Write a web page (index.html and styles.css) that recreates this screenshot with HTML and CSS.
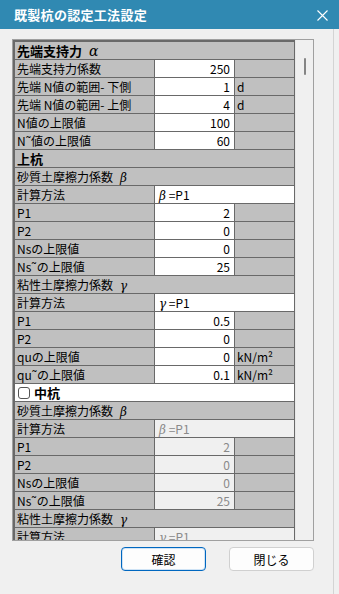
FILE: index.html
```html
<!DOCTYPE html>
<html lang="ja">
<head>
<meta charset="utf-8">
<title>既製杭の認定工法設定</title>
<link rel="stylesheet" href="styles.css">
</head>
<body>
<div class="titlebar">
  <span class="title">既製杭の認定工法設定</span>
  <svg class="close" width="11" height="11" viewBox="0 0 11 11"><path d="M0.5 0.5L10.5 10.5M10.5 0.5L0.5 10.5" stroke="#fff" stroke-width="1.1" fill="none"/></svg>
</div>
<div class="frame">
  <div class="grid">
    <div class="full sec">先端支持力<span class="gk gap">α</span></div>
    <div class="lbl">先端支持力係数</div><div class="val">250</div><div class="unit"></div>
    <div class="lbl">先端 N値の範囲- 下側</div><div class="val">1</div><div class="unit">d</div>
    <div class="lbl">先端 N値の範囲- 上側</div><div class="val">4</div><div class="unit">d</div>
    <div class="lbl">N値の上限値</div><div class="val">100</div><div class="unit"></div>
    <div class="lbl">N˜値の上限値</div><div class="val">60</div><div class="unit"></div>
    <div class="full sec">上杭</div>
    <div class="full sub">砂質土摩擦力係数<span class="gk gap">β</span></div>
    <div class="lbl">計算方法</div><div class="method"><span class="gk">β</span> =P1</div>
    <div class="lbl">P1</div><div class="val">2</div><div class="unit"></div>
    <div class="lbl">P2</div><div class="val">0</div><div class="unit"></div>
    <div class="lbl">Nsの上限値</div><div class="val">0</div><div class="unit"></div>
    <div class="lbl">Ns˜の上限値</div><div class="val">25</div><div class="unit"></div>
    <div class="full sub">粘性土摩擦力係数<span class="gk gap">γ</span></div>
    <div class="lbl">計算方法</div><div class="method"><span class="gk">γ</span> =P1</div>
    <div class="lbl">P1</div><div class="val">0.5</div><div class="unit"></div>
    <div class="lbl">P2</div><div class="val">0</div><div class="unit"></div>
    <div class="lbl">quの上限値</div><div class="val">0</div><div class="unit">kN/m²</div>
    <div class="lbl">qu˜の上限値</div><div class="val">0.1</div><div class="unit">kN/m²</div>
    <div class="full sec check"><span class="box"></span>中杭</div>
    <div class="full sub">砂質土摩擦力係数<span class="gk gap">β</span></div>
    <div class="lbl">計算方法</div><div class="method dis"><span class="gk">β</span> =P1</div>
    <div class="lbl">P1</div><div class="val dis">2</div><div class="unit"></div>
    <div class="lbl">P2</div><div class="val dis">0</div><div class="unit"></div>
    <div class="lbl">Nsの上限値</div><div class="val dis">0</div><div class="unit"></div>
    <div class="lbl">Ns˜の上限値</div><div class="val dis">25</div><div class="unit"></div>
    <div class="full sub">粘性土摩擦力係数<span class="gk gap">γ</span></div>
    <div class="lbl">計算方法</div><div class="method dis"><span class="gk">γ</span> =P1</div>
  </div>
  <div class="scrollbar"><div class="thumb"></div></div>
</div>
<div class="buttons">
  <button class="btn primary">確認</button>
  <button class="btn">閉じる</button>
</div>
<div class="edge"></div>
</body>
</html>
```
FILE: styles.css
```css
* { box-sizing: border-box; }
html, body { margin: 0; padding: 0; }
body {
  width: 339px;
  height: 594px;
  overflow: hidden;
  position: relative;
  background: #f0f0f0;
  font-family: "Noto Sans CJK JP", "Noto Sans", sans-serif;
  color: #000;
}
.titlebar {
  height: 29px;
  background: #3089b2;
  display: flex;
  align-items: center;
  justify-content: space-between;
  padding: 0 11px 0 14px;
  color: #fff;
}
.title {
  font-size: 13px;
  font-weight: bold;
  line-height: 1;
  letter-spacing: 0.3px;
}
.close { display: block; margin-top: 1px; }
.frame {
  margin: 10px 0 0 12px;
  width: 302px;
  height: 502px;
  border: 1px solid #a0a0a0;
  display: flex;
  background: #f0f0f0;
}
.grid {
  width: 282px;
  height: 500px;
  overflow: hidden;
  border-left: 2px solid #696969;
  border-top: 2px solid #696969;
  display: grid;
  grid-template-columns: 140px 80px 60px;
  grid-auto-rows: 18px;
  align-content: start;
}
.grid > div {
  border-right: 1px solid #696969;
  border-bottom: 1px solid #696969;
  padding: 0 2px;
  font-size: 12px;
  line-height: 17px;
  white-space: nowrap;
  overflow: hidden;
}
.lbl, .unit, .sub, .sec { background: #c0c0c0; }
.full { grid-column: 1 / -1; }
.sec { font-weight: bold; font-size: 13px !important; }
.val {
  background: #fff;
  text-align: right;
  padding-right: 4px !important;
}
.method {
  grid-column: 2 / 4;
  background: #fff;
  padding-left: 4px !important;
}
.dis { background: #f0f0f0; color: #8a8a8a; }
.gk { font-family: "DejaVu Serif", serif; font-style: italic; font-weight: normal; font-size: 12px; }
.gap { margin-left: 7px; }
.sec .gk { font-size: 14px; }
.check { background: #fff; display: flex; align-items: center; }
.box {
  width: 12px;
  height: 12px;
  border: 1px solid #555;
  border-radius: 3px;
  background: #fff;
  margin: 0 4px 0 1px;
  flex: none;
}
.scrollbar { flex: 1; position: relative; border-left: 1px solid #e8e8e8; }
.thumb {
  position: absolute;
  left: 8px;
  top: 18px;
  width: 2px;
  height: 17px;
  background: #858585;
  border-radius: 1px;
}
.buttons {
  display: flex;
  gap: 23px;
  margin: 6px 0 0 121px;
}
.btn {
  width: 85px;
  height: 24px;
  padding: 0;
  border: 1px solid #d0d0d0;
  border-radius: 4px;
  background: #fdfdfd;
  font-family: "Noto Sans CJK JP", sans-serif;
  font-size: 12px;
  color: #000;
}
.primary { border: 1px solid #0067c0; box-shadow: inset 0 0 0 1px #cfe3f5; }
.edge {
  position: absolute;
  left: 333px;
  top: 29px;
  width: 1px;
  height: 565px;
  background: #d4d4d4;
}
```
